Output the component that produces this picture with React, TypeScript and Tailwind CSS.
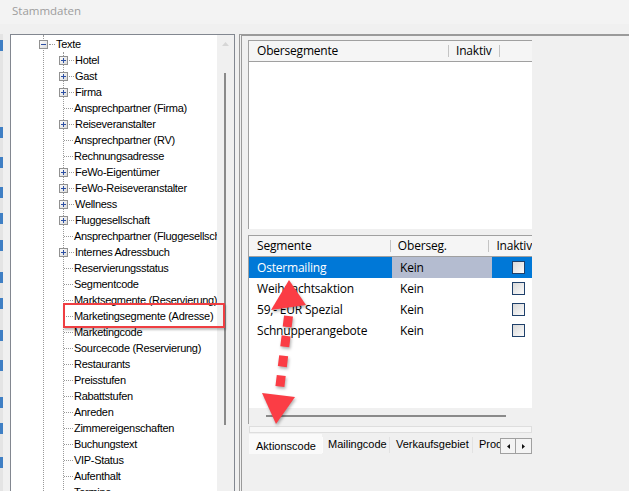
import * as React from "react";

const treeItems: [string, boolean][] = [
  ["Hotel", true],
  ["Gast", true],
  ["Firma", true],
  ["Ansprechpartner (Firma)", false],
  ["Reiseveranstalter", true],
  ["Ansprechpartner (RV)", false],
  ["Rechnungsadresse", false],
  ["FeWo-Eigentümer", true],
  ["FeWo-Reiseveranstalter", true],
  ["Wellness", true],
  ["Fluggesellschaft", true],
  ["Ansprechpartner (Fluggesellschaft)", false],
  ["Internes Adressbuch", true],
  ["Reservierungsstatus", false],
  ["Segmentcode", false],
  ["Marktsegmente (Reservierung)", false],
  ["Marketingsegmente (Adresse)", false],
  ["Marketingcode", false],
  ["Sourcecode (Reservierung)", false],
  ["Restaurants", false],
  ["Preisstufen", false],
  ["Rabattstufen", false],
  ["Anreden", false],
  ["Zimmereigenschaften", false],
  ["Buchungstext", false],
  ["VIP-Status", false],
  ["Aufenthalt", false],
  ["Termine", false],
];

const segments = [
  { name: "Ostermailing", parent: "Kein", selected: true },
  { name: "Weihnachtsaktion", parent: "Kein" },
  { name: "59,- EUR Spezial", parent: "Kein" },
  { name: "Schnupperangebote", parent: "Kein" },
];

const edgeMarks = [40, 127, 157, 187, 213, 240, 272, 298, 330, 360, 397, 423, 457];

function Expander({ open }: { open?: boolean }) {
  return (
    <svg width="9" height="9" viewBox="0 0 9 9" className="shrink-0">
      <defs>
        <linearGradient id="exp" x1="0" y1="0" x2="1" y2="1">
          <stop offset="0" stopColor="#ffffff" />
          <stop offset="1" stopColor="#d8d8d8" />
        </linearGradient>
      </defs>
      <rect x="0.5" y="0.5" width="8" height="8" fill="url(#exp)" stroke="#919191" />
      <path d="M2 4.5h5" stroke="#2c4fa3" />
      {!open && <path d="M4.5 2v5" stroke="#2c4fa3" />}
    </svg>
  );
}

function Dots({ w }: { w: string }) {
  return <span className={`${w} h-0 shrink-0 border-t border-dotted border-[#9a9a9a]`} />;
}

function Check() {
  return (
    <div className="w-[13px] h-[13px] border border-[#1f406a] bg-linear-to-br from-[#d9d9d9] to-[#fbfbfb]" />
  );
}

function Tree() {
  return (
    <div className="w-[225px] h-full flex border-l border-t border-r border-[#828790]">
      <div className="w-[206px] h-full bg-white overflow-hidden">
        <div className="ml-[32px] h-full border-l border-dotted border-[#9a9a9a] pt-px tracking-[-0.3px]">
          <div className="flex items-center h-[16px] -ml-[5px]">
            <Expander open />
            <span className="w-[6px] ml-px h-0 border-t border-dotted border-[#9a9a9a]" />
            <span className="ml-px whitespace-nowrap">Texte</span>
          </div>
          <div className="ml-[19px] border-l border-dotted border-[#9a9a9a]">
            {treeItems.map(([label, plus]) => (
              <div key={label} className="flex items-center h-[16px] whitespace-nowrap">
                {plus ? (
                  <>
                    <span className="-ml-[5px] flex">
                      <Expander />
                    </span>
                    <Dots w="w-[5px] ml-px" />
                  </>
                ) : (
                  <Dots w="w-[9px]" />
                )}
                <span className="ml-[1px]">{label}</span>
              </div>
            ))}
          </div>
        </div>
      </div>
      <div className="w-[17px] h-full bg-[#f0f0f0] flex flex-col">
        <div className="h-[17px] flex items-center justify-center">
          <svg width="7" height="4" viewBox="0 0 7 4">
            <path d="M0 4L3.5 0L7 4Z" fill="#d6d6d6" />
          </svg>
        </div>
        <div className="mt-[21px] ml-[7px] w-[2px] h-[352px] bg-[#8a8a8a]" />
      </div>
    </div>
  );
}

function HeaderSep() {
  return <span className="w-px h-[12px] bg-[#c4c4c4] shrink-0" />;
}

function ListPanel() {
  return (
    <div className="flex-1 h-full border-l border-t border-[#9a9a9a]">
      <div className="ml-px h-full border-l border-t border-[#9a9a9a] pl-[6px] pt-[4px] font-['Segoe_UI','Open_Sans',sans-serif] text-[12px] tracking-[-0.2px]">
        {/* Obersegmente */}
        <div className="w-[284px] h-[189px] flex flex-col border-l border-t border-[#a0a0a0]">
          <div className="h-[21px] flex items-center bg-[#f5f5f5] border-b border-[#a0a0a0]">
            <span className="w-[199px] pl-[8px]">Obersegmente</span>
            <HeaderSep />
            <span className="w-[50px] pl-[7px]">Inaktiv</span>
            <HeaderSep />
          </div>
          <div className="flex-1 bg-white" />
        </div>

        {/* Segmente */}
        <div className="mt-[6px] w-[284px] h-[189px] flex flex-col border-l border-t border-[#a0a0a0]">
          <div className="h-[21px] flex items-center bg-[#f5f5f5] border-b border-[#a0a0a0] overflow-hidden whitespace-nowrap">
            <span className="w-[143px] pl-[8px]">Segmente</span>
            <HeaderSep />
            <span className="w-[99px] pl-[7px]">Oberseg.</span>
            <HeaderSep />
            <span className="pl-[7px]">Inaktiv</span>
          </div>
          <div className="flex-1 bg-white">
            {segments.map((s) => (
              <div key={s.name} className="h-[21px] flex">
                <div
                  className={`w-[143px] pl-[8px] flex items-center ${
                    s.selected ? "bg-[#0078d7] text-white" : ""
                  }`}
                >
                  {s.name}
                </div>
                <div
                  className={`w-[100px] pl-[8px] flex items-center ${
                    s.selected ? "bg-[#b4bcd0]" : ""
                  }`}
                >
                  {s.parent}
                </div>
                <div
                  className={`flex-1 pl-[20px] flex items-center ${
                    s.selected ? "bg-[#0078d7]" : ""
                  }`}
                >
                  <Check />
                </div>
              </div>
            ))}
          </div>
          <div className="h-[16px] bg-[#f0f0f0] pt-[7px] pl-[17px]">
            <div className="w-[240px] h-[2px] bg-[#8a8a8a]" />
          </div>
        </div>

        <div className="mt-[2px] ml-px w-[283px] h-[7px] bg-[#f7f7f7] border border-[#dedede]" />

        {/* Tabs */}
        <div className="mt-px ml-px flex items-start font-['Liberation_Sans',Arial,sans-serif] text-[11px] tracking-normal whitespace-nowrap">
          <div className="w-[73px] h-[20px] bg-[#fafafa] pl-[7px] pt-[5px] leading-[14px]">Aktionscode</div>
          <div className="mt-[3px] w-[67px] h-[16px] border-l border-[#fcfcfc] pl-[5px] leading-[14px]">Mailingcode</div>
          <div className="mt-[3px] w-[83px] h-[16px] border-l border-[#e2e2e2] pl-[6px] leading-[14px]">Verkaufsgebiet</div>
          <div className="mt-[3px] w-[28px] h-[16px] border-l border-[#e2e2e2] pl-[6px] leading-[14px] overflow-hidden">Produkt</div>
          <div className="mt-[4px] flex">
            <div className="w-[16px] h-[16px] border border-[#a0a0a0] bg-[#f4f4f4] flex items-center justify-center">
              <svg width="3" height="5" viewBox="0 0 3 5">
                <path d="M3 0L0 2.5L3 5Z" fill="#111" />
              </svg>
            </div>
            <div className="w-[16px] h-[16px] border border-l-0 border-[#a0a0a0] bg-[#f4f4f4] flex items-center justify-center">
              <svg width="3" height="5" viewBox="0 0 3 5">
                <path d="M0 0L3 2.5L0 5Z" fill="#111" />
              </svg>
            </div>
          </div>
        </div>
      </div>
    </div>
  );
}

export default function App() {
  return (
    <div className="relative w-[629px] h-[491px] overflow-hidden bg-[#f0f0f0] font-['Liberation_Sans',Arial,sans-serif] text-[11px] text-black">
      <div className="h-[24px] bg-[#f3f3f3] pl-[12px] leading-[22px] font-['Segoe_UI','Open_Sans',sans-serif] text-[11.5px] text-[#9d9d9d]">
        Stammdaten
      </div>
      <div className="flex h-[467px] pt-[10px]">
        <div className="w-[10px] h-full flex">
          <div className="w-[3px] h-full bg-[#e4e4e4] flex flex-col">
            {edgeMarks.map((y, i) => (
              <div
                key={y}
                className="w-[3px] h-[11px] bg-[#3f7fc4]"
                style={{ marginTop: i === 0 ? y - 34 : y - edgeMarks[i - 1] - 11 }}
              />
            ))}
          </div>
        </div>
        <Tree />
        <div className="w-[4px]" />
        <ListPanel />
      </div>

      {/* annotation highlight */}
      <div className="absolute left-[63px] top-[303px] w-[162px] h-[25px] border-2 border-[#ef3e42] shadow-[1px_2px_2px_rgba(0,0,0,0.25)]" />

      {/* annotation arrow */}
      <svg
        className="absolute left-0 top-0 pointer-events-none drop-shadow-[1px_2px_1.5px_rgba(0,0,0,0.3)]"
        width="629"
        height="491"
      >
        <line x1="288.5" y1="316" x2="279" y2="394" stroke="#fb3d45" strokeWidth="9" strokeDasharray="11 9" />
        <polygon points="289,280 271,310 306,305" fill="#fb3d45" />
        <polygon points="276,424 262,393 295,397" fill="#fb3d45" />
      </svg>
    </div>
  );
}
